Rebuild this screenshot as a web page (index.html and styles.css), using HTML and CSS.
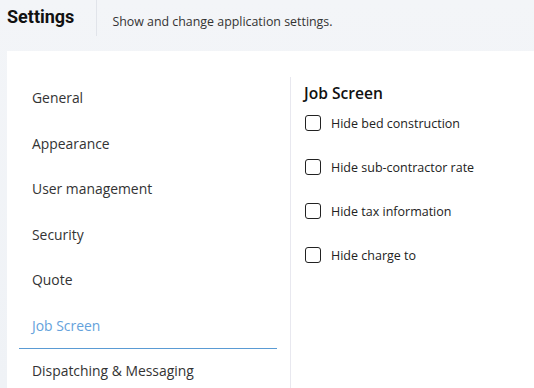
FILE: index.html
```html
<!DOCTYPE html>
<html lang="en">
<head>
    <meta charset="UTF-8">
    <meta name="viewport" content="width=device-width, initial-scale=1.0">
    <title>Settings</title>
    <link rel="stylesheet" href="styles.css">
</head>
<body>
    <header class="page-header">
        <h1 class="page-title">Settings</h1>
        <p class="page-subtitle">Show and change application settings.</p>
    </header>

    <div class="card">
        <nav class="side-nav">
            <a class="nav-item">General</a>
            <a class="nav-item">Appearance</a>
            <a class="nav-item">User management</a>
            <a class="nav-item">Security</a>
            <a class="nav-item">Quote</a>
            <a class="nav-item active">Job Screen</a>
            <a class="nav-item">Dispatching &amp; Messaging</a>
        </nav>

        <section class="panel">
            <h2 class="panel-title">Job Screen</h2>
            <label class="check-row"><input type="checkbox"><span class="box"></span>Hide bed construction</label>
            <label class="check-row"><input type="checkbox"><span class="box"></span>Hide sub-contractor rate</label>
            <label class="check-row"><input type="checkbox"><span class="box"></span>Hide tax information</label>
            <label class="check-row"><input type="checkbox"><span class="box"></span>Hide charge to</label>
        </section>
    </div>
</body>
</html>
```

FILE: styles.css
```css
:root {
    --text-color: #333;
    --active-color: #64a2dc;
    --line-color: #5a9bd4;
    --border-color: #e8e8ef;
    --bg-color: #eff2f6;
}

* {
    margin: 0;
    padding: 0;
    box-sizing: border-box;
}

html, body {
    height: 100%;
}

body {
    font-family: 'Open Sans', 'DejaVu Sans', sans-serif;
    background: linear-gradient(180deg, #f3f5f8 0%, var(--bg-color) 100%);
    color: var(--text-color);
    overflow: hidden;
}

.page-header {
    display: flex;
    align-items: stretch;
    height: 51px;
    padding: 2px 0 15px 7px;
}

.page-title {
    font-family: Roboto, 'Liberation Sans', sans-serif;
    font-size: 18px;
    font-weight: 700;
    color: #111;
    line-height: 34px;
    margin-top: -2px;
    padding-right: 22px;
    border-right: 1px solid #e1e4ea;
}

.page-subtitle {
    font-size: 12.4px;
    color: #333;
    line-height: 34px;
    padding-left: 15px;
    margin-top: 3px;
}

.card {
    display: flex;
    background: #fff;
    margin-left: 7px;
    padding-top: 26px;
    height: calc(100% - 51px);
}

.side-nav {
    display: flex;
    flex-direction: column;
    width: 258px;
    margin: -1.5px 13px 0 12px;
}

.nav-item {
    display: flex;
    align-items: center;
    flex-shrink: 0;
    height: 45.5px;
    padding-left: 13px;
    font-size: 13.9px;
    color: var(--text-color);
    border-bottom: 1px solid transparent;
    cursor: pointer;
}

.nav-item.active {
    color: var(--active-color);
    border-bottom-color: var(--line-color);
}

.panel {
    flex: 1;
    border-left: 1px solid var(--border-color);
    padding: 6px 0 0 13px;
}

.panel-title {
    font-size: 15.6px;
    font-weight: 600;
    color: #111;
    line-height: 20px;
    margin-bottom: 7px;
}

.check-row {
    display: flex;
    align-items: center;
    height: 44px;
    margin-top: -9px;
    margin-bottom: 9px;
    font-size: 12.5px;
    color: #222;
    cursor: pointer;
}

.check-row input {
    display: none;
}

.box {
    width: 16px;
    height: 16px;
    border: 1.5px solid #222;
    border-radius: 3px;
    margin-right: 10px;
    margin-left: 1px;
}
```
